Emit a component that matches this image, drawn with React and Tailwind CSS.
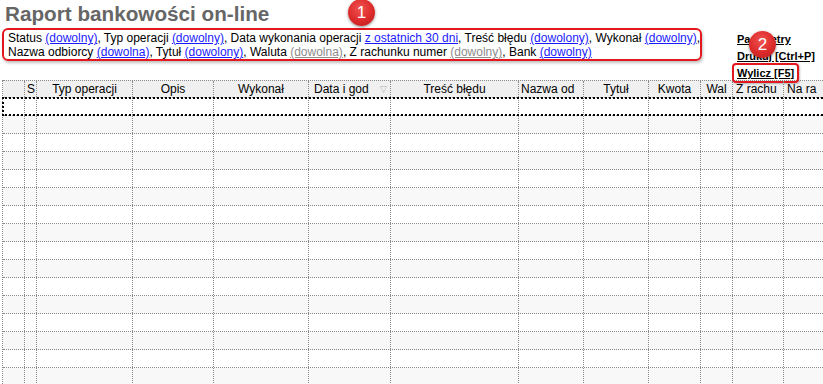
import React from 'react';

const columns = [
    { label: '', cls: 'w-[22px]', align: 'text-center' },
    { label: 'S', cls: 'w-[12px]', align: 'text-left pl-[2px]' },
    { label: 'Typ operacji', cls: 'w-[96px]', align: 'text-center' },
    { label: 'Opis', cls: 'w-[81px]', align: 'text-center' },
    { label: 'Wykonał', cls: 'w-[95px]', align: 'text-center' },
    { label: 'Data i god', cls: 'w-[82px]', align: 'text-left pl-[5px]', sort: true },
    { label: 'Treść błędu', cls: 'w-[128px]', align: 'text-center' },
    { label: 'Nazwa od', cls: 'w-[65px]', align: 'text-left pl-[2px]' },
    { label: 'Tytuł', cls: 'w-[65px]', align: 'text-center' },
    { label: 'Kwota', cls: 'w-[52px]', align: 'text-center' },
    { label: 'Wal', cls: 'w-[32px]', align: 'text-center' },
    { label: 'Z rachu', cls: 'w-[51px]', align: 'text-left pl-[3px]' },
    { label: 'Na ra', cls: 'w-[80px]', align: 'text-left pl-[3px]' },
];

const rows = Array.from({ length: 16 }, (_, i) => i);

const Badge = ({ n, className }) => (
    <div
        className={`absolute w-[27px] h-[27px] rounded-full flex items-center justify-center text-white text-[17px] leading-none shadow-[0_1px_3px_rgba(0,0,0,0.45)] bg-[radial-gradient(circle_at_45%_35%,#f0524f_0%,#dc2a2a_55%,#b81d1d_100%)] ${className}`}
    >
        {n}
    </div>
);

const Link = ({ children, gray }) => (
    <span className={`underline ${gray ? 'text-[#8c8c8c]' : 'text-[#1a1aff]'}`}>{children}</span>
);

const App = () => {
    return (
        <div className="relative w-[823px] h-[384px] overflow-hidden bg-white font-['Liberation_Sans',Arial,sans-serif] text-black">
            {/* top area */}
            <div className="flex h-[80px]">
                <div className="w-[735px] shrink-0">
                    <h1 className="pl-[5px] pt-[4px] text-[20.7px] leading-[20px] font-bold text-[#666666]">
                        Raport bankowości on-line
                    </h1>
                    <div className="ml-[2px] mt-[4px] w-[700px] h-[33px] border-2 border-[#e3171e] rounded-[6px] px-[4px] pt-[1px] text-[12px] leading-[14px] whitespace-nowrap shadow-[1px_2px_3px_rgba(0,0,0,0.25)]">
                        <div>
                            Status <Link>(dowolny)</Link>, Typ operacji <Link>(dowolny)</Link>, Data wykonania operacji{' '}
                            <Link>z ostatnich 30 dni</Link>, Treść błędu <Link>(dowolony)</Link>, Wykonał <Link>(dowolny)</Link>,
                        </div>
                        <div>
                            Nazwa odbiorcy <Link>(dowolna)</Link>, Tytuł <Link>(dowolony)</Link>, Waluta <Link gray>(dowolna)</Link>, Z
                            rachunku numer <Link gray>(dowolny)</Link>, Bank <Link>(dowolny)</Link>
                        </div>
                    </div>
                </div>
                <div className="flex flex-col items-start pt-[31px] pl-[2px] text-[11px] font-bold leading-[17px]">
                    <span className="underline">Parametry</span>
                    <span className="underline">Drukuj [Ctrl+P]</span>
                    <span className="-ml-[5px] -mt-[2px] border-2 border-[#e3171e] rounded-[4px] px-[3px] leading-[16px] shadow-[1px_1px_2px_rgba(0,0,0,0.25)]">
                        <span className="underline">Wylicz [F5]</span>
                    </span>
                </div>
            </div>

            {/* grid */}
            <div className="ml-[2px] border-l border-dotted border-[#8a8a8a]">
                <div className="flex h-[18px] bg-[#f0f0f0] border-y border-dotted border-[#8a8a8a]">
                    {columns.map((c, i) => (
                        <div
                            key={i}
                            className={`${c.cls} ${c.align} shrink-0 relative overflow-hidden whitespace-nowrap border-r border-dotted border-[#8a8a8a] text-[12px] leading-[16px]`}
                        >
                            {c.label}
                            {c.sort && (
                                <span className="absolute right-[3px] top-[0px] text-[9px] text-[#b0b0b0]">▽</span>
                            )}
                        </div>
                    ))}
                </div>
                {rows.map((r) => (
                    <div
                        key={r}
                        className={`relative flex h-[18px] border-b border-dotted border-[#8a8a8a] ${r % 2 === 1 ? 'bg-[#f8f8f8]' : 'bg-white'}`}
                    >
                        {columns.map((c, i) => (
                            <div key={i} className={`${c.cls} shrink-0 border-r border-dotted border-[#8a8a8a]`} />
                        ))}
                        {r === 0 && (
                            <div className="absolute -left-[1px] -top-[1px] -bottom-[1px] w-[900px] border-2 border-dotted border-black pointer-events-none" />
                        )}
                    </div>
                ))}
            </div>

            <Badge n="1" className="left-[348px] top-[-1px]" />
            <Badge n="2" className="left-[749px] top-[31px]" />
        </div>
    );
};

export default App;
